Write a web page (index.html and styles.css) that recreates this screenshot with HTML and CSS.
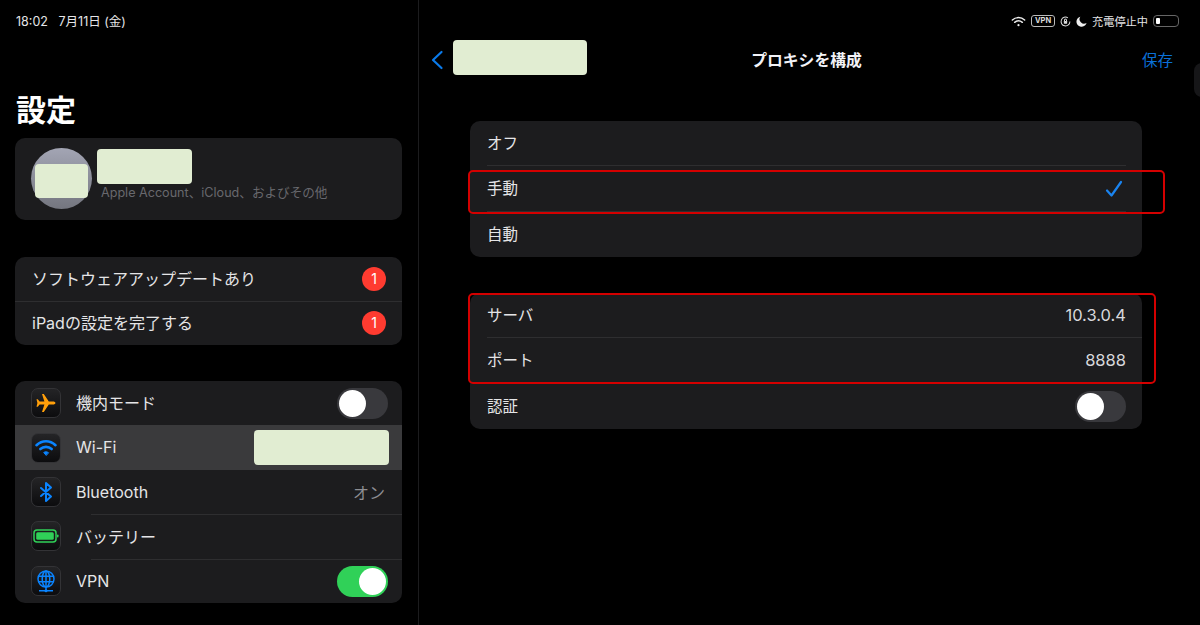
FILE: index.html
```html
<!DOCTYPE html>
<html lang="ja">
<head>
    <meta charset="UTF-8">
    <meta name="viewport" content="width=device-width, initial-scale=1.0">
    <title>プロキシを構成</title>
    <link rel="stylesheet" href="styles.css">
</head>
<body>

    <!-- サイドバー -->
    <aside class="sidebar">
        <div class="clock">18:02&nbsp;&nbsp;&nbsp;7月11日 (金)</div>
        <h1 class="sidebar-title">設定</h1>

        <div class="card profile">
            <div class="avatar"><div class="mask avatar-mask"></div></div>
            <div class="profile-text">
                <div class="mask name-mask"></div>
                <div class="profile-sub">Apple Account、iCloud、およびその他</div>
            </div>
        </div>

        <div class="card notices">
            <div class="side-row notice-row">
                <span class="side-text">ソフトウェアアップデートあり</span>
                <span class="badge">1</span>
            </div>
            <div class="side-row notice-row">
                <span class="side-text">iPadの設定を完了する</span>
                <span class="badge">1</span>
            </div>
        </div>

        <div class="card settings">
            <div class="side-row">
                <span class="tile">
                    <svg viewBox="0 0 24 24" width="24" height="24"><path fill="#ff9f0a" d="M21.500 12c0-.9-1.200-1.500-2.500-1.500h-4.200L9.800 3H8l2.400 7.500H5.600L3.800 8.300H2.500l.9 3.700-.9 3.700h1.300l1.800-2.200h4.800L8 21h1.800l5-7.500H19c1.300 0 2.500-.6 2.500-1.500z"/></svg>
                </span>
                <span class="side-text side-label">機内モード</span>
                <span class="toggle"><span class="knob"></span></span>
            </div>
            <div class="side-row active">
                <span class="tile">
                    <svg viewBox="0 0 24 24" width="24" height="24" fill="none" stroke="#0a84ff" stroke-width="2.600" stroke-linecap="round"><path d="M2.500 9.200C8 4 16 4 21.500 9.200"/><path d="M6.300 13c3.300-2.900 8.100-2.900 11.400 0"/><path d="M12 19.200l-2.300-2.700c1.400-1 3.200-1 4.600 0z" fill="#0a84ff" stroke-width="1" stroke-linejoin="round"/></svg>
                </span>
                <span class="side-text side-label">Wi-Fi</span>
                <div class="mask wifi-mask"></div>
            </div>
            <div class="side-row lower">
                <span class="tile">
                    <svg viewBox="0 0 24 24" width="24" height="24" fill="none" stroke="#0a84ff" stroke-width="2" stroke-linejoin="round" stroke-linecap="round"><path d="M7 8l10 8.500-5 4.500V3l5 4.500L7 16"/></svg>
                </span>
                <span class="side-text side-label">Bluetooth</span>
                <span class="side-text side-value">オン</span>
            </div>
            <div class="side-row lower line-top">
                <span class="tile">
                    <svg viewBox="0 0 26 24" width="26" height="24"><rect x="1" y="6" width="22" height="12" rx="3" fill="none" stroke="#30d158" stroke-width="1.500"/><rect x="3.200" y="8.200" width="17.600" height="7.600" rx="1.500" fill="#30d158"/><rect x="24" y="10.500" width="1.500" height="3" rx="0.700" fill="#30d158"/></svg>
                </span>
                <span class="side-text side-label">バッテリー</span>
            </div>
            <div class="side-row lower line-top">
                <span class="tile">
                    <svg viewBox="0 0 24 24" width="24" height="24" fill="none" stroke="#0a84ff" stroke-width="1.500"><circle cx="12" cy="10" r="8"/><ellipse cx="12" cy="10" rx="3.800" ry="8"/><path d="M4.500 7.200h15M4.500 12.800h15M12 2v16"/><path d="M12 18v4M5 21.800h14"/><circle cx="12" cy="21.800" r="1.500" fill="#0a84ff" stroke="none"/></svg>
                </span>
                <span class="side-text side-label">VPN</span>
                <span class="toggle on"><span class="knob"></span></span>
            </div>
        </div>
    </aside>

    <!-- 右側のプロキシ画面 -->
    <main class="detail">
        <div class="status-bar">
            <svg viewBox="0 0 16 12" width="15" height="11" fill="none" stroke="#eee" stroke-width="1.600" stroke-linecap="round"><path d="M1.300 4.300c3.900-3.400 9.500-3.400 13.400 0"/><path d="M3.800 6.900c2.500-2.100 5.900-2.100 8.400 0"/><circle cx="8" cy="10" r="1.200" fill="#eee" stroke="none"/></svg>
            <span class="vpn-tag">VPN</span>
            <svg viewBox="0 0 12 12" width="11" height="11" fill="none" stroke="#ddd" stroke-width="1.100"><path d="M10.800 6A4.800 4.800 0 1 1 8.600 2"/><rect x="4.200" y="5.400" width="3.600" height="3" rx="0.500" fill="#ddd" stroke="none"/><path d="M4.900 5.400V4.500a1.100 1.100 0 0 1 2.200 0v.9"/></svg>
            <svg viewBox="0 0 12 12" width="11" height="11"><path fill="#eee" d="M4.700 0.700A5.600 5.600 0 1 0 11.500 7.700 5 5 0 0 1 4.700 0.700z"/></svg>
            <span class="status-text">充電停止中</span>
            <span class="battery"><span class="battery-level"></span></span>
        </div>

        <nav class="nav-bar">
            <div class="nav-back">
                <svg viewBox="0 0 14 20" width="14" height="20" fill="none" stroke="#0a7aea" stroke-width="2.200" stroke-linecap="round" stroke-linejoin="round"><path d="M11.500 2L3 10l8.500 8"/></svg>
                <div class="mask nav-mask"></div>
            </div>
            <div class="nav-title">プロキシを構成</div>
            <div class="nav-save">保存</div>
        </nav>

        <div class="card mode-card">
            <div class="row line-short"><span class="row-label">オフ</span></div>
            <div class="row line-short">
                <span class="row-label">手動</span>
                <svg class="check" viewBox="0 0 18 18" width="18" height="18" fill="none" stroke="#1a84f0" stroke-width="2.200" stroke-linecap="round" stroke-linejoin="round"><path d="M2 10.500l4.500 5L16 2"/></svg>
                <div class="red-box box-mode"></div>
            </div>
            <div class="row"><span class="row-label">自動</span></div>
        </div>

        <div class="card server-card">
            <div class="server-group">
                <div class="row line-full"><span class="row-label">サーバ</span><span class="row-value">10.3.0.4</span></div>
                <div class="row line-full"><span class="row-label">ポート</span><span class="row-value">8888</span></div>
                <div class="red-box box-server"></div>
            </div>
            <div class="row">
                <span class="row-label">認証</span>
                <span class="toggle"><span class="knob"></span></span>
            </div>
        </div>

        <div class="edge-handle"></div>
    </main>

</body>
</html>
```

FILE: styles.css
```css
* {
    box-sizing: border-box;
}

body {
    margin: 0;
    width: 1200px;
    height: 625px;
    overflow: hidden;
    display: flex;
    background-color: #000;
    color: #e5e5e7;
    font-family: Inter, "Noto Sans CJK JP", sans-serif;
    font-size: 15.5px;
}

.card {
    background-color: #1c1c1e;
    border-radius: 10px;
}

/* 塗りつぶしのマスク */
.mask {
    background-color: #e1edd2;
    border-radius: 4px;
}

/* サイドバー */
.sidebar {
    width: 419px;
    flex-shrink: 0;
    padding: 0 16px 0 15px;
    border-right: 1px solid #1c1c1e;
}

.clock {
    height: 44px;
    padding-left: 1px;
    line-height: 44px;
    font-size: 12.500px;
    color: #e5e5e7;
}

.sidebar-title {
    margin: 48px 0 10px;
    padding-left: 1px;
    font-size: 30px;
    line-height: 36px;
    font-weight: 700;
    color: #fff;
}

.profile {
    height: 82px;
    padding: 10px 16px;
    display: flex;
    gap: 5px;
}

.avatar {
    width: 61px;
    height: 61px;
    position: relative;
    border-radius: 50%;
    background: linear-gradient(#a3a5b4, #74767f);
}

.avatar-mask {
    position: absolute;
    left: 4px;
    top: 16px;
    width: 53px;
    height: 34px;
}

.profile-text {
    padding-top: 1px;
}

.name-mask {
    width: 95px;
    height: 35px;
}

.profile-sub {
    padding-left: 4px;
    line-height: 18px;
    font-size: 12.600px;
    color: #68686d;
}

.notices {
    margin-top: 37px;
    height: 88px;
}

.side-row {
    height: 44.400px;
    position: relative;
    display: flex;
    align-items: center;
    font-size: 16px;
}

.side-text {
    padding-bottom: 2px;
}

.side-row.lower .side-text {
    padding-bottom: 0;
}

.side-row.lower .toggle {
    margin-top: 2px;
}

.notice-row {
    height: 44px;
    padding: 0 16px 0 17px;
    justify-content: space-between;
}

.notice-row + .notice-row {
    box-shadow: inset 0 1px 0 #2e2e30;
}

.badge {
    width: 24px;
    height: 24px;
    border-radius: 50%;
    background-color: #ff3b30;
    color: #fff;
    font-size: 14px;
    line-height: 24px;
    text-align: center;
}

.settings {
    margin-top: 36px;
    height: 222px;
    overflow: hidden;
}

.settings .side-row {
    padding: 0 14px 0 16px;
    gap: 15px;
}

.line-top::before {
    content: "";
    position: absolute;
    left: 76px;
    right: 0;
    top: 0;
    height: 1px;
    background-color: #2e2e30;
}

.side-label {
    flex: 1;
}

.side-row.active {
    background-color: #3a3a3c;
}

.side-value {
    color: #8e8e93;
    margin-right: 3px;
}

.wifi-mask {
    width: 135px;
    height: 35px;
    margin-right: -1px;
}

.tile {
    width: 30px;
    height: 30px;
    flex-shrink: 0;
    display: flex;
    align-items: center;
    justify-content: center;
    border: 1px solid #333336;
    border-radius: 7px;
    background: linear-gradient(#242426, #0c0c0e);
}

.tile svg {
    flex-shrink: 0;
}

/* トグル */
.toggle {
    width: 51px;
    height: 31px;
    flex-shrink: 0;
    display: flex;
    align-items: center;
    padding: 0 2px;
    border-radius: 16px;
    background-color: #39393d;
}

.toggle.on {
    justify-content: flex-end;
    background-color: #30d158;
}

.knob {
    width: 27px;
    height: 27px;
    border-radius: 50%;
    background-color: #fff;
}

/* 右側 */
.detail {
    flex: 1;
    position: relative;
}

.status-bar {
    height: 40px;
    padding: 2px 21px 0 0;
    display: flex;
    justify-content: flex-end;
    align-items: center;
    gap: 5px;
    color: #e5e5e7;
}

.vpn-tag {
    width: 24px;
    height: 12px;
    border: 1px solid #bbb;
    border-radius: 3px;
    font-size: 7.500px;
    font-weight: 700;
    line-height: 10px;
    text-align: center;
    color: #ddd;
}

.status-text {
    font-size: 11.200px;
}

.battery {
    width: 26px;
    height: 12px;
    padding: 2px;
    border: 1px solid #666;
    border-radius: 4px;
    display: flex;
}

.battery-level {
    width: 4px;
    background-color: #fff;
    border-radius: 1px;
}

.nav-bar {
    height: 40px;
    padding: 0 27px 0 11px;
    display: grid;
    grid-template-columns: 1fr auto 1fr;
    align-items: center;
}

.nav-back {
    display: flex;
    align-items: center;
    gap: 9px;
}

.nav-mask {
    width: 134px;
    height: 35px;
    margin-bottom: 5px;
}

.nav-title {
    margin-left: 10px;
    padding-bottom: 2px;
    font-size: 15.800px;
    font-weight: 700;
    color: #f2f2f7;
}

.nav-save {
    padding-bottom: 3px;
    text-align: right;
    color: #0a70d8;
}

.mode-card,
.server-card {
    width: 672px;
    margin-left: 51px;
}

.mode-card {
    margin-top: 41px;
}

.server-card {
    margin-top: 36px;
}

.row {
    height: 45.300px;
    padding: 0 16px;
    position: relative;
    display: flex;
    align-items: center;
    justify-content: space-between;
}

.row-label {
    padding: 0 0 3px 1px;
}

.row-value {
    padding-bottom: 1px;
    font-size: 16.500px;
    color: #d8d8dc;
}

.check {
    margin-right: 3px;
}

/* 区切り線 */
.line-short::after,
.line-full::after {
    content: "";
    position: absolute;
    left: 17px;
    bottom: 0;
    height: 1px;
    background-color: #2e2e30;
}

.line-short::after {
    right: 16px;
}

.line-full::after {
    right: 0;
}

/* 赤い枠 */
.server-group {
    position: relative;
}

.red-box {
    position: absolute;
    border: 2px solid #d40000;
    border-radius: 5px;
    z-index: 1;
}

.box-mode {
    left: -2px;
    right: -23px;
    top: 4px;
    bottom: -2px;
}

.box-server {
    left: -2px;
    right: -14px;
    top: 0;
    bottom: -1px;
}

.edge-handle {
    position: absolute;
    right: -10px;
    top: 63px;
    width: 16px;
    height: 34px;
    border-radius: 8px;
    background-color: #161618;
}
```
